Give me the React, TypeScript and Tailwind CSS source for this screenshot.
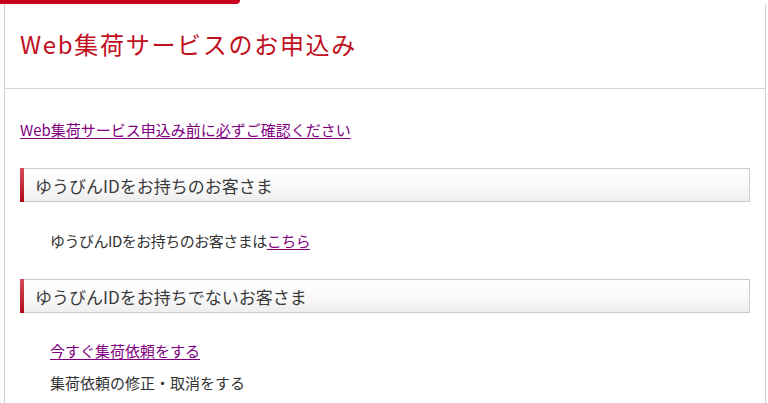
export default function App() {
    const font = { fontFamily: '"Noto Sans CJK JP", "Liberation Sans", sans-serif' };

    return (
        <div className="w-[768px] h-[403px] bg-white overflow-hidden" style={font}>
            {/* 上部の赤いタブ */}
            <div className="w-[240px] h-[4px] bg-[#c8001e] rounded-br-[6px]" />
            <div className="ml-[4px] mr-[2px] border-x border-[#cfcfcf] min-h-[399px]">
                {/* タイトル */}
                <div className="px-[15px] pt-[22px] pb-[26px] border-b border-[#d4d4d4]">
                    <h1 className="text-[24px] leading-[36px] tracking-[1.7px] text-[#c0101e] font-normal">
                        Web集荷サービスのお申込み
                    </h1>
                </div>

                <div className="px-[15px] pt-[30px]">
                    <a href="#" className="block w-fit text-[15px] leading-[22px] text-[#800080] underline underline-offset-2">
                        Web集荷サービス申込み前に必ずご確認ください
                    </a>

                    <SectionHeader className="mt-[27px]">ゆうびんIDをお持ちのお客さま</SectionHeader>

                    <div className="pl-[30px] mt-[28px]">
                        <p className="text-[15px] leading-[22px] tracking-[-0.5px] text-[#333]">
                            ゆうびんIDをお持ちのお客さまは
                            <a href="#" className="text-[#800080] underline underline-offset-2">こちら</a>
                        </p>
                    </div>

                    <SectionHeader className="mt-[27px]">ゆうびんIDをお持ちでないお客さま</SectionHeader>

                    <div className="pl-[30px] mt-[27px] flex flex-col gap-[10px]">
                        <a href="#" className="block w-fit text-[15px] leading-[22px] text-[#800080] underline underline-offset-2">
                            今すぐ集荷依頼をする
                        </a>
                        <p className="text-[15px] leading-[22px] text-[#333]">集荷依頼の修正・取消をする</p>
                    </div>
                </div>
            </div>
        </div>
    );
}

function SectionHeader({ children, className }: { children: React.ReactNode; className?: string }) {
    return (
        <div className={`flex h-[34px] ${className ?? ""}`}>
            <div className="w-[4px] bg-gradient-to-b from-[#d6485a] to-[#b0000f]" />
            <div className="flex-1 flex items-center pl-[11px] border border-l-0 border-[#cccccc] bg-gradient-to-b from-[#ffffff] via-[#fafafa] to-[#eeeeee]">
                <h2 className="text-[17px] leading-none text-[#3a3a3a] font-normal">{children}</h2>
            </div>
        </div>
    );
}
